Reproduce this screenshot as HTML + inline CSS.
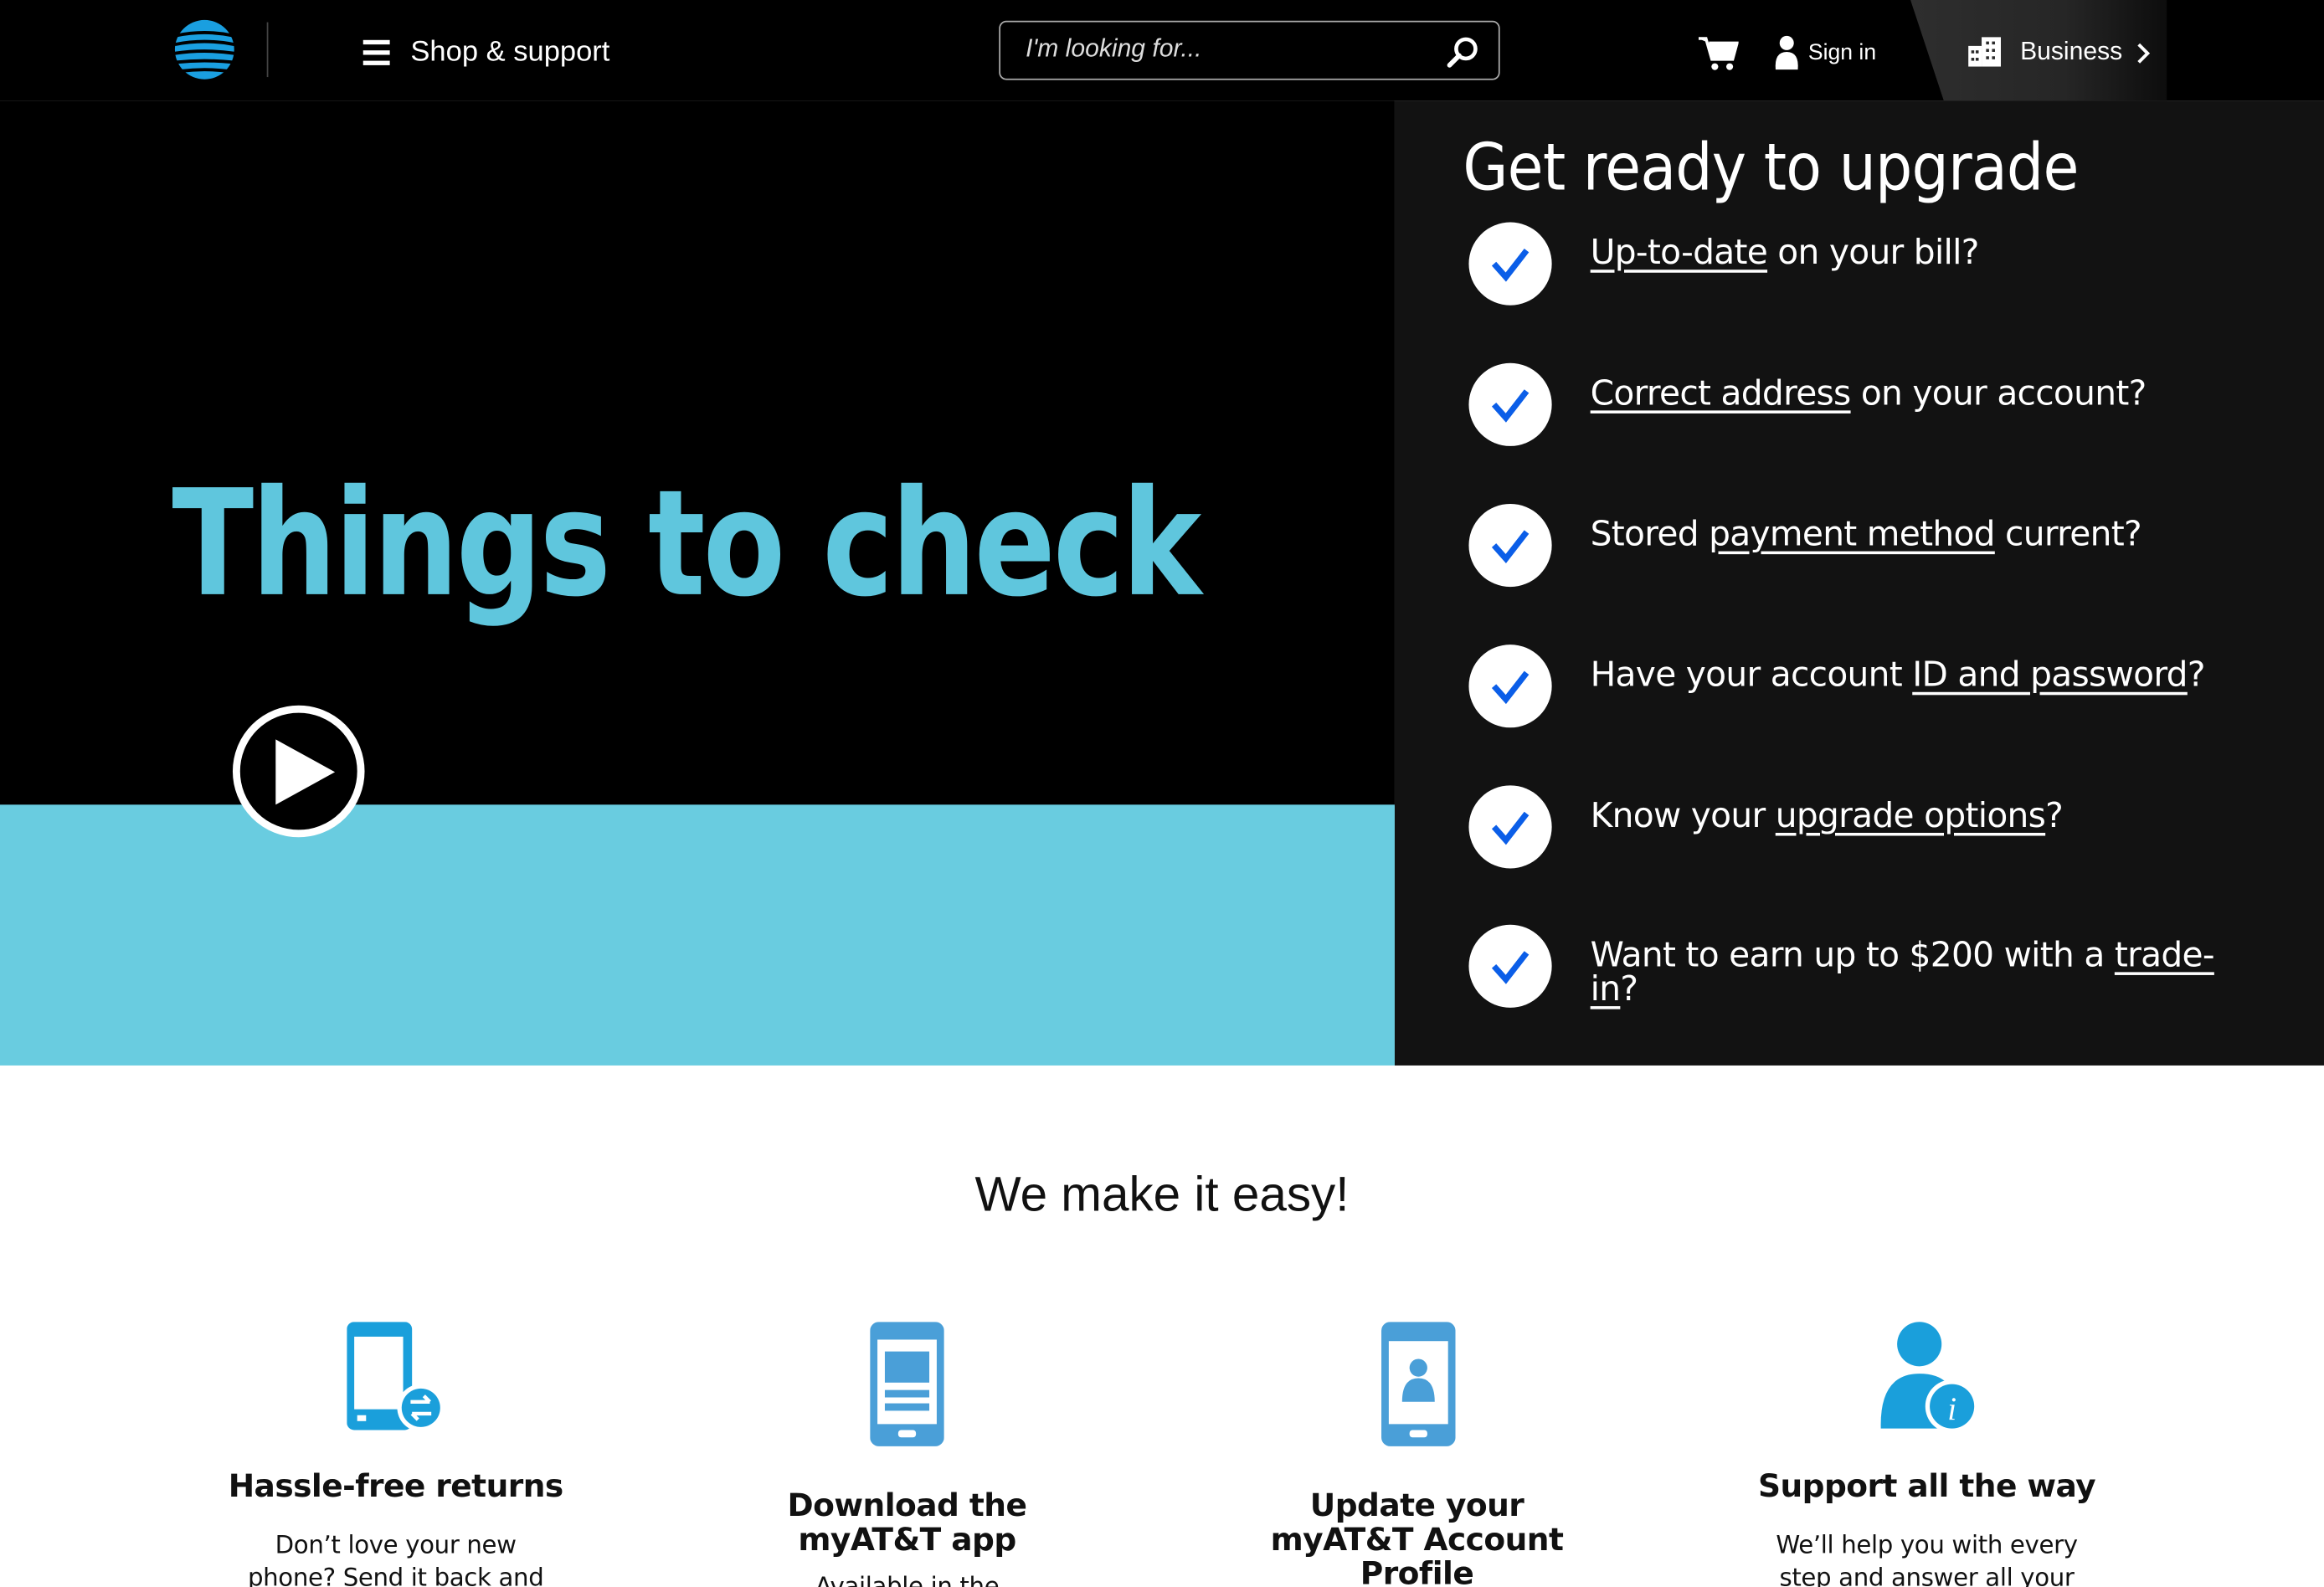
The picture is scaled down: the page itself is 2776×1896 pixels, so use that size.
<!DOCTYPE html>
<html><head><meta charset="utf-8"><style>
html,body{margin:0;padding:0;background:#fff;overflow:hidden}
body{width:2776px;height:1896px}
#w{position:absolute;left:0;top:0;width:1568px;height:1071px;transform:scale(1.77041);transform-origin:0 0;font-family:"Liberation Sans","DejaVu Sans",sans-serif;overflow:hidden}
.a{position:absolute;white-space:nowrap}
.chk{position:absolute;left:991px;width:56px;height:56px;border-radius:50%;background:#fff}
.chk svg{position:absolute;left:14px;top:14px}
.t{position:absolute;left:1073px;color:#fff;font-size:23px;font-family:"DejaVu Sans",sans-serif;letter-spacing:-0.4px}
.t u{text-underline-offset:4px}
.h{position:absolute;font-weight:bold;font-size:21.2px;text-align:center;color:#111;font-family:"DejaVu Sans",sans-serif;line-height:23px;width:300px;letter-spacing:-0.3px}
.p{position:absolute;font-size:16.5px;text-align:center;color:#111;width:300px;line-height:22px;font-family:"DejaVu Sans",sans-serif;letter-spacing:-0.2px}
</style></head><body><div id="w">
<div class="a" style="left:0;top:0;width:1568px;height:68px;background:#000"></div>
<svg class="a" style="left:117px;top:13px" width="42" height="41" viewBox="0 0 42 41"><circle cx="21" cy="20.5" r="20" fill="#1a9fe0"/><g stroke="#000" stroke-width="2.2" fill="none"><path d="M2 11 Q21 7 40 11"/><path d="M1 17 Q21 13 41 17"/><path d="M1 23 Q21 20 41 23"/><path d="M2 29 Q21 27 40 29"/><path d="M5 35 Q21 33 37 35"/></g></svg>
<div class="a" style="left:180px;top:15px;width:1px;height:37px;background:#444"></div>
<div class="a" style="left:245px;top:27px;width:18px;height:3px;background:#fff;box-shadow:0 7px 0 #fff,0 14px 0 #fff"></div>
<div class="a" style="left:277px;top:24px;font-size:19.5px;color:#fff">Shop &amp; support</div>
<div class="a" style="left:674px;top:14px;width:336px;height:38px;border:1px solid #aaa;border-radius:5px"></div>
<div class="a" style="left:692px;top:23px;font-size:17px;color:#ddd;font-style:italic">I'm looking for...</div>
<svg class="a" style="left:976px;top:24px" width="22" height="22" viewBox="0 0 22 22"><circle cx="13" cy="9" r="6.5" stroke="#fff" stroke-width="2.6" fill="none"/><path d="M8.5 13.5 L2 20" stroke="#fff" stroke-width="3.2" stroke-linecap="round"/></svg>
<svg class="a" style="left:1146px;top:24px" width="27" height="24" viewBox="0 0 27 24"><path d="M0 2h5l4 14h14l3-11H7" fill="#fff" stroke="#fff" stroke-width="2"/><circle cx="11" cy="21" r="2.3" fill="#fff"/><circle cx="21" cy="21" r="2.3" fill="#fff"/></svg>
<svg class="a" style="left:1197px;top:24px" width="17" height="23" viewBox="0 0 17 23"><circle cx="8.5" cy="5" r="4.8" fill="#fff"/><path d="M1 23 Q0 11 8.5 11 Q17 11 16 23Z" fill="#fff"/></svg>
<div class="a" style="left:1220px;top:27px;font-size:15px;color:#fff">Sign in</div>
<div class="a" style="left:1289px;top:0;width:173px;height:68px;background:linear-gradient(90deg,#2e2e2e,#262626 60%,#0d0d0d);clip-path:polygon(0 0,100% 0,100% 100%,13% 100%)"></div>
<svg class="a" style="left:1328px;top:25px" width="22" height="20" viewBox="0 0 22 20"><rect x="0" y="6" width="9" height="14" fill="#fff"/><rect x="9" y="0" width="13" height="20" fill="#fff"/><g fill="#2a2a2a"><rect x="2" y="9" width="2" height="2"/><rect x="5" y="9" width="2" height="2"/><rect x="2" y="14" width="2" height="2"/><rect x="5" y="14" width="2" height="2"/><rect x="12" y="3" width="2" height="2"/><rect x="16" y="3" width="2" height="2"/><rect x="12" y="8" width="2" height="2"/><rect x="16" y="8" width="2" height="2"/><rect x="12" y="13" width="2" height="2"/><rect x="16" y="13" width="2" height="2"/></g></svg>
<div class="a" style="left:1363px;top:25px;font-size:17px;color:#fff">Business</div>
<svg class="a" style="left:1441px;top:29px" width="10" height="14" viewBox="0 0 10 14"><path d="M2 1l6 6-6 6" stroke="#fff" stroke-width="2.2" fill="none"/></svg>

<div class="a" style="left:0;top:68px;width:941px;height:476px;background:#000"></div>
<div class="a" style="left:0;top:543px;width:941px;height:176px;background:#69cce0"></div>
<div class="a" style="left:116px;top:310px;font-size:99px;font-weight:bold;color:#5fc6dd;font-family:'DejaVu Sans',sans-serif;letter-spacing:-2px;transform:scaleX(0.818);transform-origin:0 0">Things to check</div>
<div class="a" style="left:157px;top:476px;width:79px;height:79px;border:5px solid #fff;border-radius:50%;background:#000"></div>
<svg class="a" style="left:184px;top:498px" width="46" height="46" viewBox="0 0 46 46"><path d="M2 1 L42 23 L2 45Z" fill="#fff"/></svg>

<div class="a" style="left:941px;top:68px;width:627px;height:651px;background:#121212"></div>
<div class="a" style="left:987px;top:88px;font-size:44px;color:#fff;font-family:'DejaVu Sans',sans-serif;letter-spacing:-0.5px;transform:scaleX(0.896);transform-origin:0 0">Get ready to upgrade</div>

<div class="chk" style="top:150px"><svg width="28" height="28" viewBox="0 0 28 28"><path d="M3 14 L11 23 L25 5" stroke="#0b5ee8" stroke-width="4" fill="none"/></svg></div>
<div class="chk" style="top:245px"><svg width="28" height="28" viewBox="0 0 28 28"><path d="M3 14 L11 23 L25 5" stroke="#0b5ee8" stroke-width="4" fill="none"/></svg></div>
<div class="chk" style="top:340px"><svg width="28" height="28" viewBox="0 0 28 28"><path d="M3 14 L11 23 L25 5" stroke="#0b5ee8" stroke-width="4" fill="none"/></svg></div>
<div class="chk" style="top:435px"><svg width="28" height="28" viewBox="0 0 28 28"><path d="M3 14 L11 23 L25 5" stroke="#0b5ee8" stroke-width="4" fill="none"/></svg></div>
<div class="chk" style="top:530px"><svg width="28" height="28" viewBox="0 0 28 28"><path d="M3 14 L11 23 L25 5" stroke="#0b5ee8" stroke-width="4" fill="none"/></svg></div>
<div class="chk" style="top:624px"><svg width="28" height="28" viewBox="0 0 28 28"><path d="M3 14 L11 23 L25 5" stroke="#0b5ee8" stroke-width="4" fill="none"/></svg></div>

<div class="t" style="top:158px"><u>Up-to-date</u> on your bill?</div>
<div class="t" style="top:253px"><u>Correct address</u> on your account?</div>
<div class="t" style="top:348px">Stored <u>payment method</u> current?</div>
<div class="t" style="top:443px">Have your account <u>ID and password</u>?</div>
<div class="t" style="top:538px">Know your <u>upgrade options</u>?</div>
<div class="t" style="top:634px;line-height:23px">Want to earn up to $200 with a <u>trade-</u><br><u>in</u>?</div>

<div class="a" style="left:0;top:787px;width:1568px;text-align:center;font-size:33px;color:#111">We make it easy!</div>

<svg class="a" style="left:234px;top:892px" width="66" height="74" viewBox="0 0 66 74"><rect x="0" y="0" width="44" height="73" rx="5" fill="#1a9fdb"/><rect x="5" y="10" width="33" height="49" fill="#fff"/><rect x="7" y="63" width="6" height="4" fill="#fff"/><circle cx="50" cy="58" r="16" fill="#fff"/><circle cx="50" cy="58" r="13" fill="#1a9fdb"/><path d="M43 54h13M52 50l4 4M57 62H44M48 66l-4-4" stroke="#fff" stroke-width="2.5" fill="none"/></svg>
<svg class="a" style="left:587px;top:892px" width="50" height="85" viewBox="0 0 50 85"><rect x="0" y="0" width="50" height="84" rx="6" fill="#4a9fd8"/><rect x="5" y="12" width="40" height="57" fill="#fff"/><rect x="10" y="20" width="30" height="21" fill="#4a9fd8"/><rect x="10" y="46" width="30" height="5" fill="#4a9fd8"/><rect x="10" y="55" width="30" height="5" fill="#4a9fd8"/><rect x="19" y="73" width="12" height="5" rx="2" fill="#fff"/></svg>
<svg class="a" style="left:932px;top:892px" width="50" height="85" viewBox="0 0 50 85"><rect x="0" y="0" width="50" height="84" rx="6" fill="#4a9fd8"/><rect x="5" y="13" width="40" height="56" fill="#fff"/><circle cx="25" cy="31" r="6" fill="#4a9fd8"/><path d="M14 54 Q14 38 25 38 Q36 38 36 54Z" fill="#4a9fd8"/><rect x="19" y="73" width="12" height="5" rx="2" fill="#fff"/></svg>
<svg class="a" style="left:1268px;top:891px" width="68" height="76" viewBox="0 0 68 76"><circle cx="27" cy="16" r="15" fill="#1a9fdb"/><path d="M1 73 Q0 36 27 36 Q50 36 52 58 L52 73Z" fill="#1a9fdb"/><circle cx="49" cy="58" r="18" fill="#fff"/><circle cx="49" cy="58" r="15" fill="#1a9fdb"/><text x="49" y="67" text-anchor="middle" font-size="22" font-style="italic" fill="#fff" font-family="Liberation Serif,serif">i</text></svg>

<div class="h" style="left:117px;top:991px">Hassle-free returns</div>
<div class="p" style="left:117px;top:1032px">Don’t love your new<br>phone? Send it back and</div>
<div class="h" style="left:462px;top:1004px">Download the<br>myAT&amp;T app</div>
<div class="p" style="left:462px;top:1060px">Available in the</div>
<div class="h" style="left:806px;top:1004px">Update your<br>myAT&amp;T Account<br>Profile</div>
<div class="h" style="left:1150px;top:991px">Support all the way</div>
<div class="p" style="left:1150px;top:1032px">We’ll help you with every<br>step and answer all your</div>
</div></body></html>
